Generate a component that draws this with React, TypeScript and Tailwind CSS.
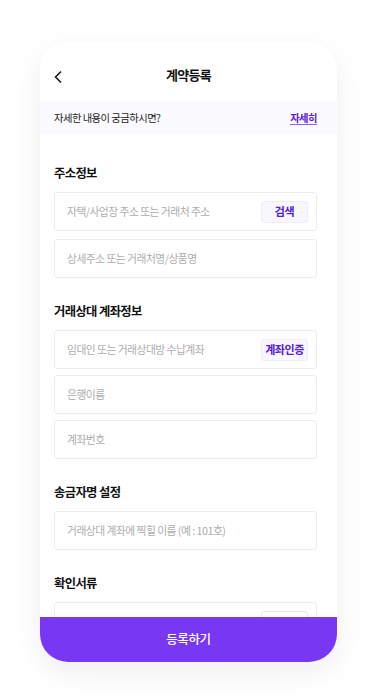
import * as React from 'react';

const font = { fontFamily: '"Noto Sans CJK KR", "Noto Sans", sans-serif' };

type Field = { placeholder: string; action?: string; actionVariant?: 'purple' | 'plain' };
type Section = { title: string; fields: Field[]; gap: string };

const sections: Section[] = [
  {
    title: '주소정보',
    gap: 'gap-[8px]',
    fields: [
      { placeholder: '자택/사업장 주소 또는 거래처 주소', action: '검색', actionVariant: 'purple' },
      { placeholder: '상세주소 또는 거래처명/상품명' },
    ],
  },
  {
    title: '거래상대 계좌정보',
    gap: 'gap-[6px]',
    fields: [
      { placeholder: '임대인 또는 거래상대방 수납계좌', action: '계좌인증', actionVariant: 'purple' },
      { placeholder: '은행이름' },
      { placeholder: '계좌번호' },
    ],
  },
  {
    title: '송금자명 설정',
    gap: 'gap-[6px]',
    fields: [{ placeholder: '거래상대 계좌에 찍힐 이름 (예 : 101호)' }],
  },
  {
    title: '확인서류',
    gap: 'gap-[6px]',
    fields: [{ placeholder: '', action: '', actionVariant: 'plain' }],
  },
];

const InputRow: React.FC<{ field: Field }> = ({ field }) => (
  <div className="flex h-[39px] items-center justify-between rounded-[3px] border border-[#ececef] bg-white pl-[12px] pr-[8px]">
    <span className="text-[10.8px] tracking-[-0.05em] text-[#adadad]">{field.placeholder}</span>
    {field.action !== undefined && (
      <button
        className={`flex h-[22px] w-[47px] items-center justify-center rounded-[3px] border text-[11px] font-bold tracking-[-0.04em] ${
          field.actionVariant === 'purple'
            ? 'border-[#efecf8] bg-[#f8f6ff] text-[#5420d0]'
            : 'border-[#e6e6e6] bg-white text-[#333]'
        }`}
      >
        {field.action}
      </button>
    )}
  </div>
);

export default function App() {
  return (
    <div className="min-h-[699px] w-full bg-white pt-[42px] pl-[40px]" style={font}>
      <div className="flex h-[620px] w-[297px] flex-col overflow-hidden rounded-[28px] bg-white shadow-[0_10px_30px_rgba(0,0,0,0.07)]">
        {/* Header */}
        <div className="relative flex h-[59px] shrink-0 items-start justify-center pt-[24px]">
          <svg
            className="absolute left-[13px] top-[28px]"
            width="10"
            height="14"
            viewBox="0 0 10 14"
            fill="none"
          >
            <polyline points="8,1.5 2.5,7 8,12.5" stroke="#111" strokeWidth="1.5" fill="none" />
          </svg>
          <h1 className="text-[13px] leading-[18px] font-bold tracking-[-0.05em] text-[#111]">계약등록</h1>
        </div>

        {/* Info bar */}
        <div className="flex h-[34px] shrink-0 items-center justify-between bg-[#fbfaff] pl-[14px] pr-[20px]">
          <span className="text-[10.3px] tracking-[-0.05em] text-[#222]">자세한 내용이 궁금하시면?</span>
          <span className="border-b-[1.5px] border-[#8b5cf6] text-[10.3px] leading-[13px] font-bold tracking-[-0.05em] text-[#5b21d6]">
            자세히
          </span>
        </div>

        {/* Form */}
        <div className="flex flex-1 flex-col overflow-hidden pt-[29px] pl-[14px] pr-[20px]">
          {sections.map((section, i) => (
            <div key={section.title} className={i === 0 ? '' : 'mt-6'}>
              <h2 className="text-[12.3px] leading-[18px] font-bold tracking-[-0.05em] text-[#111]">{section.title}</h2>
              <div className={`mt-[10px] flex flex-col ${section.gap}`}>
                {section.fields.map((field, j) => (
                  <InputRow key={j} field={field} />
                ))}
              </div>
            </div>
          ))}
        </div>

        {/* Submit */}
        <button className="flex h-[45px] shrink-0 items-center justify-center bg-[#7837f3] text-[12.5px] font-medium tracking-[-0.03em] text-white">
          등록하기
        </button>
      </div>
    </div>
  );
}
